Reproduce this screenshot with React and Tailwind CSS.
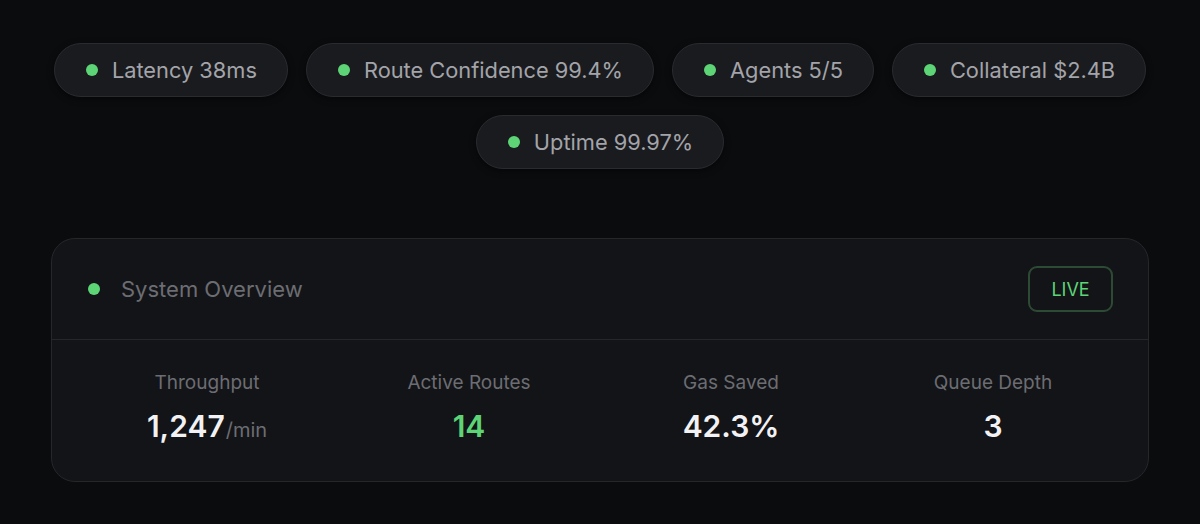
export default function App() {
  const pills = [
    "Latency 38ms",
    "Route Confidence 99.4%",
    "Agents 5/5",
    "Collateral $2.4B",
    "Uptime 99.97%",
  ];
  const stats = [
    { label: "Throughput", value: "1,247", unit: "/min" },
    { label: "Active Routes", value: "14", green: true },
    { label: "Gas Saved", value: "42.3%" },
    { label: "Queue Depth", value: "3" },
  ];
  return (
    <div
      className="w-[1200px] h-[524px] bg-[#0b0c0e] overflow-hidden px-[51px] pt-[43px]"
      style={{ fontFamily: "Inter, 'Noto Sans', sans-serif" }}
    >
      <div className="flex flex-wrap justify-center gap-[18px] mx-[-20px]">
        {pills.map((p) => (
          <div
            key={p}
            className="h-[54px] flex items-center gap-[14px] pl-[31px] pr-[30px] rounded-full bg-[#1a1b1e] border border-[#2a2b2f] shadow-[0_2px_6px_rgba(0,0,0,0.5)]"
          >
            <span className="w-[12px] h-[12px] rounded-full bg-[#5dd577]" />
            <span className="text-[21.8px] text-[#a3a4aa]">{p}</span>
          </div>
        ))}
      </div>

      <div className="mt-[69px] rounded-[24px] border border-[#26272b] bg-[#131417]">
        <div className="h-[101px] flex items-center justify-between pl-[36px] pr-[35px] border-b border-[#26272b]">
          <div className="flex items-center gap-[21px]">
            <span className="w-[12px] h-[12px] rounded-full bg-[#5dd577]" />
            <span className="text-[22px] text-[#6c6d73]">System Overview</span>
          </div>
          <div className="h-[46px] w-[85px] flex items-center justify-center rounded-[9px] border-2 border-[#2d4b34] text-[#5dd577] text-[18px]">
            LIVE
          </div>
        </div>
        <div className="grid grid-cols-4 px-[24px] pt-[31px] pb-[31px]">
          {stats.map((s) => (
            <div key={s.label} className="flex flex-col items-center">
              <span className="text-[19px] leading-[24px] text-[#6c6d73]">{s.label}</span>
              <span className="mt-[11px] leading-[40px] flex items-baseline">
                <span
                  className={`text-[30px] font-semibold ${s.green ? "text-[#5dd577]" : "text-[#f2f2f4]"}`}
                >
                  {s.value}
                </span>
                {s.unit && <span className="text-[20px] text-[#6c6d73] ml-[1px]">{s.unit}</span>}
              </span>
            </div>
          ))}
        </div>
      </div>
    </div>
  );
}
